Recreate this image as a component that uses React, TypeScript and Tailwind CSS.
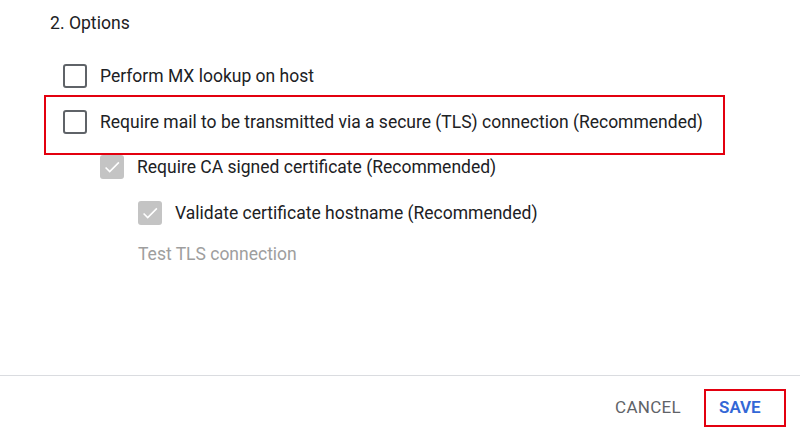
import React from 'react';

type BoxProps = { checked?: boolean; disabled?: boolean };

function CheckBox({ checked, disabled }: BoxProps) {
  if (checked) {
    return (
      <span className={`flex h-[24px] w-[24px] shrink-0 items-center justify-center rounded-[3px] ${disabled ? 'bg-[#c4c4c4]' : 'bg-[#1a73e8]'}`}>
        <svg width="22" height="22" viewBox="0 0 24 24" fill="none">
          <path d="M5 12.5l4.5 4.5L19.5 7" stroke="#fff" strokeWidth="1.7" />
        </svg>
      </span>
    );
  }
  return <span className="block h-[24px] w-[24px] shrink-0 rounded-[3px] border-2 border-[#5f6368]" />;
}

function Row({ label, checked, disabled }: { label: string } & BoxProps) {
  return (
    <div className="flex h-6 items-center gap-[13px]">
      <CheckBox checked={checked} disabled={disabled} />
      <span className="text-[17.5px] leading-6 text-[#202124]">{label}</span>
    </div>
  );
}

export default function App() {
  return (
    <div className="flex h-[440px] w-[800px] flex-col bg-white font-['Roboto',sans-serif]">
      <div className="flex-1">
        <div className="ml-[50px] mt-[11px] text-[17.6px] leading-6 text-[#202124]">2. Options</div>

        <div className="ml-[63px] mt-[29px]">
          <Row label="Perform MX lookup on host" />
        </div>

        <div className="ml-[44px] mt-[7px] w-[681px] border-2 border-[#e3000f] pb-[19px] pl-[17px] pt-[13px]">
          <Row label="Require mail to be transmitted via a secure (TLS) connection (Recommended)" />
        </div>

        <div className="ml-[100px] mt-0">
          <Row label="Require CA signed certificate (Recommended)" checked disabled />
        </div>

        <div className="ml-[138px] mt-[22px]">
          <Row label="Validate certificate hostname (Recommended)" checked disabled />
        </div>

        <div className="ml-[138px] mt-[17px] text-[17.5px] leading-6 text-[#9e9e9e]">Test TLS connection</div>
      </div>

      <div className="h-px bg-[#dadce0]" />

      <div className="flex h-16 items-center justify-end gap-[23px] pr-[14px]">
        <button className="text-[17px] font-normal uppercase tracking-[0.3px] text-[#5f6368]">Cancel</button>
        <button className="flex h-[38px] w-[82px] items-center justify-start border-2 border-[#e3000f] pl-[13px] text-[17px] font-semibold uppercase text-[#3367d6]">
          Save
        </button>
      </div>
    </div>
  );
}
